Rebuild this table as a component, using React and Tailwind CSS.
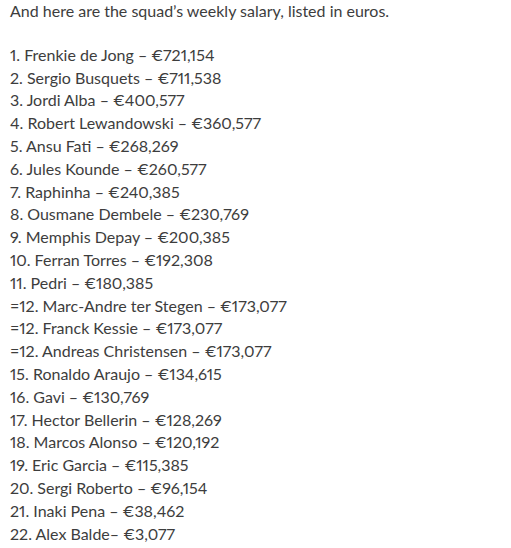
import React from "react";

const players = [
  "1. Frenkie de Jong – €721,154",
  "2. Sergio Busquets – €711,538",
  "3. Jordi Alba – €400,577",
  "4. Robert Lewandowski – €360,577",
  "5. Ansu Fati – €268,269",
  "6. Jules Kounde – €260,577",
  "7. Raphinha – €240,385",
  "8. Ousmane Dembele – €230,769",
  "9. Memphis Depay – €200,385",
  "10. Ferran Torres – €192,308",
  "11. Pedri – €180,385",
  "=12. Marc-Andre ter Stegen – €173,077",
  "=12. Franck Kessie – €173,077",
  "=12. Andreas Christensen – €173,077",
  "15. Ronaldo Araujo – €134,615",
  "16. Gavi – €130,769",
  "17. Hector Bellerin – €128,269",
  "18. Marcos Alonso – €120,192",
  "19. Eric Garcia – €115,385",
  "20. Sergi Roberto – €96,154",
  "21. Inaki Pena – €38,462",
  "22. Alex Balde– €3,077",
];

const App = () => {
  return (
    <div className="w-[511px] h-[548px] bg-white overflow-hidden pl-[10px] text-[16px] leading-[22.8px] text-[#3d3d3d] font-['Lato',sans-serif] proportional-nums">
      <p>And here are the squad’s weekly salary, listed in euros.</p>
      <div className="mt-[21px]">
        {players.map((p) => (
          <div key={p}>{p}</div>
        ))}
      </div>
    </div>
  );
};

export default App;
